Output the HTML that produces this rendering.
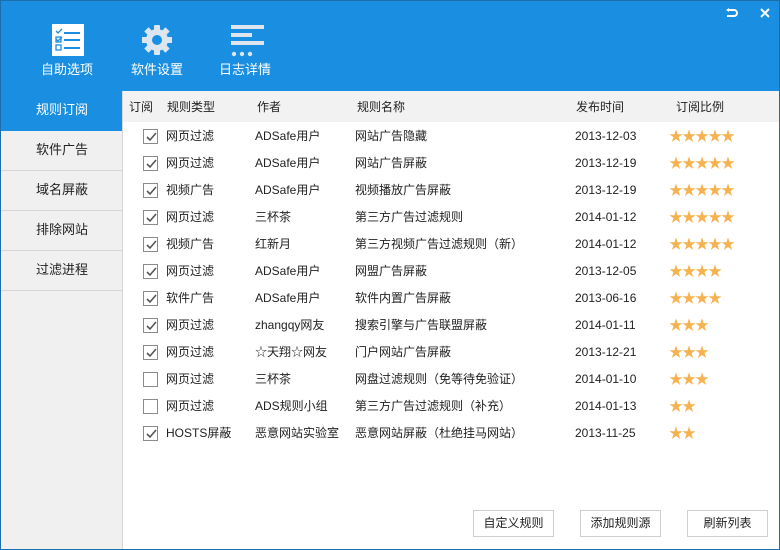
<!DOCTYPE html>
<html><head><meta charset="utf-8"><style>
*{margin:0;padding:0;box-sizing:border-box}
body{width:780px;height:550px;overflow:hidden;font-family:"Liberation Sans","Noto Sans CJK SC",sans-serif;font-size:12px;color:#222;background:#fff;position:relative}
.frame{position:absolute;inset:0;border:1px solid #1d6ea8;pointer-events:none;z-index:9}
.top{position:absolute;left:0;top:0;width:780px;height:91px;background:#1a8fe1}
.tb{position:absolute;top:59px;color:#fff;font-size:13px;text-align:center;width:80px}
.side{position:absolute;left:0;top:91px;width:123px;height:459px;background:#f0f0f0;border-right:1px solid #d6d6d6}
.si{height:40px;line-height:38px;border-bottom:1px solid #d6d6d6;font-size:13px;padding-left:36px}
.si.a{background:#1a8fe1;color:#fff;border-bottom:none}
.hdr{position:absolute;left:123px;top:91px;width:657px;height:31px;background:#f2f2f2}
.c{position:absolute;white-space:nowrap}
.row{position:absolute;left:123px;width:657px;height:27px}
.row .c{top:0;line-height:26px}
.cb{position:absolute;left:20px;top:6px;width:15px;height:15px;border:1px solid #8a8a8a;background:#fff}
.cb svg{position:absolute;left:1px;top:1px}
.row .st{color:#f5b24f;font-size:14px;letter-spacing:-1px;line-height:26px}
.btn{position:absolute;top:510px;height:27px;border:1px solid #cfcfcf;background:#fff;font-size:12px;text-align:center;line-height:25px;width:81px}
</style></head><body>
<div class="top">
<svg style="position:absolute;left:52px;top:24px" width="32" height="32"><rect width="32" height="32" fill="#fff"/><g stroke="#1a8fe1" stroke-width="2"><line x1="12" y1="9" x2="28" y2="9"/><line x1="12" y1="16" x2="28" y2="16"/><line x1="12" y1="24" x2="28" y2="24"/></g><g stroke="#1a8fe1" stroke-width="1.3" fill="none"><rect x="4" y="13" width="5" height="5"/><rect x="4" y="21" width="5" height="5"/><path d="M4 7l2 2 4-4M4 15l2 2 4-4"/></g></svg>
<svg style="position:absolute;left:141px;top:24px" width="32" height="32" viewBox="0 0 32 32"><g fill="#dde6ee"><circle cx="16" cy="16" r="11"/><rect x="13" y="1" width="6" height="30" rx="1"/><rect x="13" y="1" width="6" height="30" transform="rotate(45 16 16)"/><rect x="13" y="1" width="6" height="30" transform="rotate(90 16 16)"/><rect x="13" y="1" width="6" height="30" transform="rotate(135 16 16)"/></g><circle cx="16" cy="16" r="5" fill="#1a8fe1"/></svg>
<svg style="position:absolute;left:231px;top:24px" width="34" height="34"><g fill="#dde6ee"><rect x="0" y="1" width="33" height="4"/><rect x="0" y="9" width="21" height="4"/><rect x="0" y="17" width="33" height="4"/><circle cx="3" cy="30" r="2.2"/><circle cx="11" cy="30" r="2.2"/><circle cx="19" cy="30" r="2.2"/></g></svg>
<div class="tb" style="left:27px">自助选项</div>
<div class="tb" style="left:117px">软件设置</div>
<div class="tb" style="left:205px">日志详情</div>
<svg style="position:absolute;left:726px;top:8px" width="12" height="10"><path d="M1 2h7a3 3 0 0 1 0 6H1" stroke="#fff" stroke-width="2" fill="none"/><path d="M0 2l3-2v4z" fill="#fff"/></svg>
<svg style="position:absolute;left:760px;top:8px" width="10" height="10"><path d="M1 1l8 8M9 1l-8 8" stroke="#fff" stroke-width="2"/></svg>
</div>
<div class="side"><div class="si a">规则订阅</div><div class="si">软件广告</div><div class="si">域名屏蔽</div><div class="si">排除网站</div><div class="si">过滤进程</div></div>
<div class="hdr"><span class="c" style="left:6px;top:7px">订阅</span><span class="c" style="left:44px;top:7px">规则类型</span><span class="c" style="left:134px;top:7px">作者</span><span class="c" style="left:234px;top:7px">规则名称</span><span class="c" style="left:453px;top:7px">发布时间</span><span class="c" style="left:553px;top:7px">订阅比例</span></div>
<div id="rows"></div>
<div class="btn" style="left:473px">自定义规则</div>
<div class="btn" style="left:580px">添加规则源</div>
<div class="btn" style="left:687px">刷新列表</div>
<div class="frame"></div>
<script>
var d=[[1,"网页过滤","ADSafe用户","网站广告隐藏","2013-12-03",5],[1,"网页过滤","ADSafe用户","网站广告屏蔽","2013-12-19",5],[1,"视频广告","ADSafe用户","视频播放广告屏蔽","2013-12-19",5],[1,"网页过滤","三杯茶","第三方广告过滤规则","2014-01-12",5],[1,"视频广告","红新月","第三方视频广告过滤规则（新）","2014-01-12",5],[1,"网页过滤","ADSafe用户","网盟广告屏蔽","2013-12-05",4],[1,"软件广告","ADSafe用户","软件内置广告屏蔽","2013-06-16",4],[1,"网页过滤","zhangqy网友","搜索引擎与广告联盟屏蔽","2014-01-11",3],[1,"网页过滤","☆天翔☆网友","门户网站广告屏蔽","2013-12-21",3],[0,"网页过滤","三杯茶","网盘过滤规则（免等待免验证）","2014-01-10",3],[0,"网页过滤","ADS规则小组","第三方广告过滤规则（补充）","2014-01-13",2],[1,"HOSTS屏蔽","恶意网站实验室","恶意网站屏蔽（杜绝挂马网站）","2013-11-25",2]];
var h="";d.forEach(function(r,i){var y=123+i*27;h+='<div class="row" style="top:'+y+'px"><div class="cb">'+(r[0]?'<svg width="12" height="12"><path d="M2 6l3 3 6-7" stroke="#555" stroke-width="1.6" fill="none"/></svg>':'')+'</div><span class="c" style="left:43px">'+r[1]+'</span><span class="c" style="left:132px">'+r[2]+'</span><span class="c" style="left:232px">'+r[3]+'</span><span class="c" style="left:452px">'+r[4]+'</span><span class="c st" style="left:546px">'+"★".repeat(r[5])+'</span></div>'});
document.getElementById("rows").innerHTML=h;
</script>
</body></html>
